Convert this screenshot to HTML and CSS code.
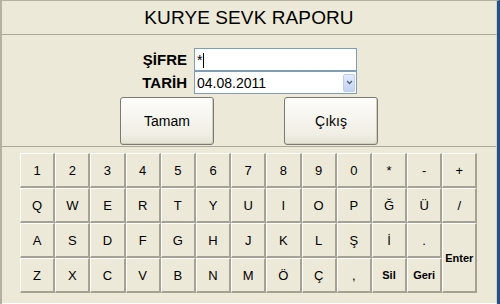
FILE: index.html
```html
<!DOCTYPE html>
<html lang="tr">
<head>
    <meta charset="UTF-8">
    <meta name="viewport" content="width=device-width, initial-scale=1.0">
    <title>Kurye Sevk Raporu</title>
    <link rel="stylesheet" href="styles.css">
</head>
<body>
    <div class="window">
        <header class="title-bar">
            <h1>KURYE SEVK RAPORU</h1>
        </header>

        <main class="panel">
            <form class="login">
                <div class="field">
                    <label>ŞİFRE</label>
                    <div class="textbox">*<span class="caret"></span></div>
                </div>
                <div class="field">
                    <label>TARİH</label>
                    <div class="textbox combo">
                        <span>04.08.2011</span>
                        <span class="combo-btn">
                            <svg width="7" height="5" viewBox="0 0 7 5"><path d="M1 1l2.5 2.5L6 1" fill="none" stroke="#4d6185" stroke-width="1.3"/></svg>
                        </span>
                    </div>
                </div>
                <div class="actions">
                    <button type="button">Tamam</button>
                    <button type="button">Çıkış</button>
                </div>
            </form>

            <div class="keypad">
                <button class="key">1</button>
                <button class="key">2</button>
                <button class="key">3</button>
                <button class="key">4</button>
                <button class="key">5</button>
                <button class="key">6</button>
                <button class="key">7</button>
                <button class="key">8</button>
                <button class="key">9</button>
                <button class="key">0</button>
                <button class="key">*</button>
                <button class="key">-</button>
                <button class="key">+</button>

                <button class="key">Q</button>
                <button class="key">W</button>
                <button class="key">E</button>
                <button class="key">R</button>
                <button class="key">T</button>
                <button class="key">Y</button>
                <button class="key">U</button>
                <button class="key">I</button>
                <button class="key">O</button>
                <button class="key">P</button>
                <button class="key">Ğ</button>
                <button class="key">Ü</button>
                <button class="key">/</button>

                <button class="key">A</button>
                <button class="key">S</button>
                <button class="key">D</button>
                <button class="key">F</button>
                <button class="key">G</button>
                <button class="key">H</button>
                <button class="key">J</button>
                <button class="key">K</button>
                <button class="key">L</button>
                <button class="key">Ş</button>
                <button class="key">İ</button>
                <button class="key">.</button>
                <button class="key key-small key-enter">Enter</button>

                <button class="key">Z</button>
                <button class="key">X</button>
                <button class="key">C</button>
                <button class="key">V</button>
                <button class="key">B</button>
                <button class="key">N</button>
                <button class="key">M</button>
                <button class="key">Ö</button>
                <button class="key">Ç</button>
                <button class="key">,</button>
                <button class="key key-small">Sil</button>
                <button class="key key-small">Geri</button>
            </div>
        </main>
    </div>
</body>
</html>
```

FILE: styles.css
```css
body {
    margin: 0;
    background-color: #ece9d8;
    font-family: "Liberation Sans", Arial, sans-serif;
    color: #000000;
}

.window {
    width: 500px;
    height: 304px;
    box-sizing: border-box;
    display: flex;
    flex-direction: column;
    border-left: 2px solid #b4b1a2;
    border-right: 3px solid #22528c;
    border-top: 1px solid #b4b1a2;
    background-color: #ece9d8;
}

.title-bar {
    height: 34px;
    box-sizing: border-box;
    border-bottom: 1px solid #aca899;
    border-right: 1px solid #d6d3c4;
    display: flex;
    align-items: center;
    justify-content: center;
}

.title-bar h1 {
    margin: 0;
    font-size: 19px;
    font-weight: normal;
    letter-spacing: 0.1px;
}

.panel {
    flex: 1;
    display: flex;
    flex-direction: column;
    border-right: 1px solid #d6d3c4;
    border-bottom: 1px solid #ffffff;
}

.login {
    margin: 0;
    padding-top: 13px;
}

.field {
    display: grid;
    grid-template-columns: 185px 163px;
    column-gap: 7px;
    align-items: center;
    height: 23px;
}

.field label {
    text-align: right;
    font-weight: bold;
    font-size: 15px;
}

.textbox {
    height: 23px;
    box-sizing: border-box;
    background-color: #ffffff;
    border: 1px solid #7f9db9;
    font-size: 14px;
    padding: 2px 2px 0;
    line-height: 18px;
    display: flex;
    align-items: flex-start;
}

.caret {
    display: inline-block;
    width: 1px;
    height: 15px;
    margin: 2px 0 0 1px;
    background-color: #000000;
}

.combo {
    justify-content: space-between;
    align-items: center;
    padding: 0 1px 0 2px;
}

.combo-btn {
    width: 12px;
    height: 18px;
    box-sizing: border-box;
    background: linear-gradient(#e2eafc, #c4d3f5);
    border: 1px solid #c0cde9;
    border-radius: 2px;
    display: flex;
    align-items: center;
    justify-content: center;
}

.actions {
    display: flex;
    gap: 70px;
    padding-left: 118px;
    margin-top: 3px;
}

.actions button {
    width: 94px;
    height: 48px;
    font-family: "Liberation Sans", Arial, sans-serif;
    font-size: 14px;
    color: #000000;
    background: linear-gradient(#fdfdfb, #f0eee4 80%, #e4e1d3);
    border: 1px solid #7a7a72;
    border-radius: 3px;
    box-shadow: inset -1px -1px 0 #d2cfc0;
    padding: 0;
}

.keypad {
    margin-top: 1px;
    border-top: 1px solid #aca899;
    padding: 6px 0 0 18px;
    display: grid;
    grid-template-columns: repeat(13, 35.2px);
    grid-auto-rows: 35px;
}

.key {
    font-family: "Liberation Sans", Arial, sans-serif;
    font-size: 13px;
    color: #000000;
    background-color: #ece9d8;
    border-style: solid;
    border-width: 1px 2px 2px 1px;
    border-color: #ffffff #a5a294 #a5a294 #ffffff;
    padding: 0;
    margin: 0;
}

.key-small {
    font-size: 11px;
    font-weight: bold;
}

.key-enter {
    grid-column: 13;
    grid-row: span 2;
}
```
